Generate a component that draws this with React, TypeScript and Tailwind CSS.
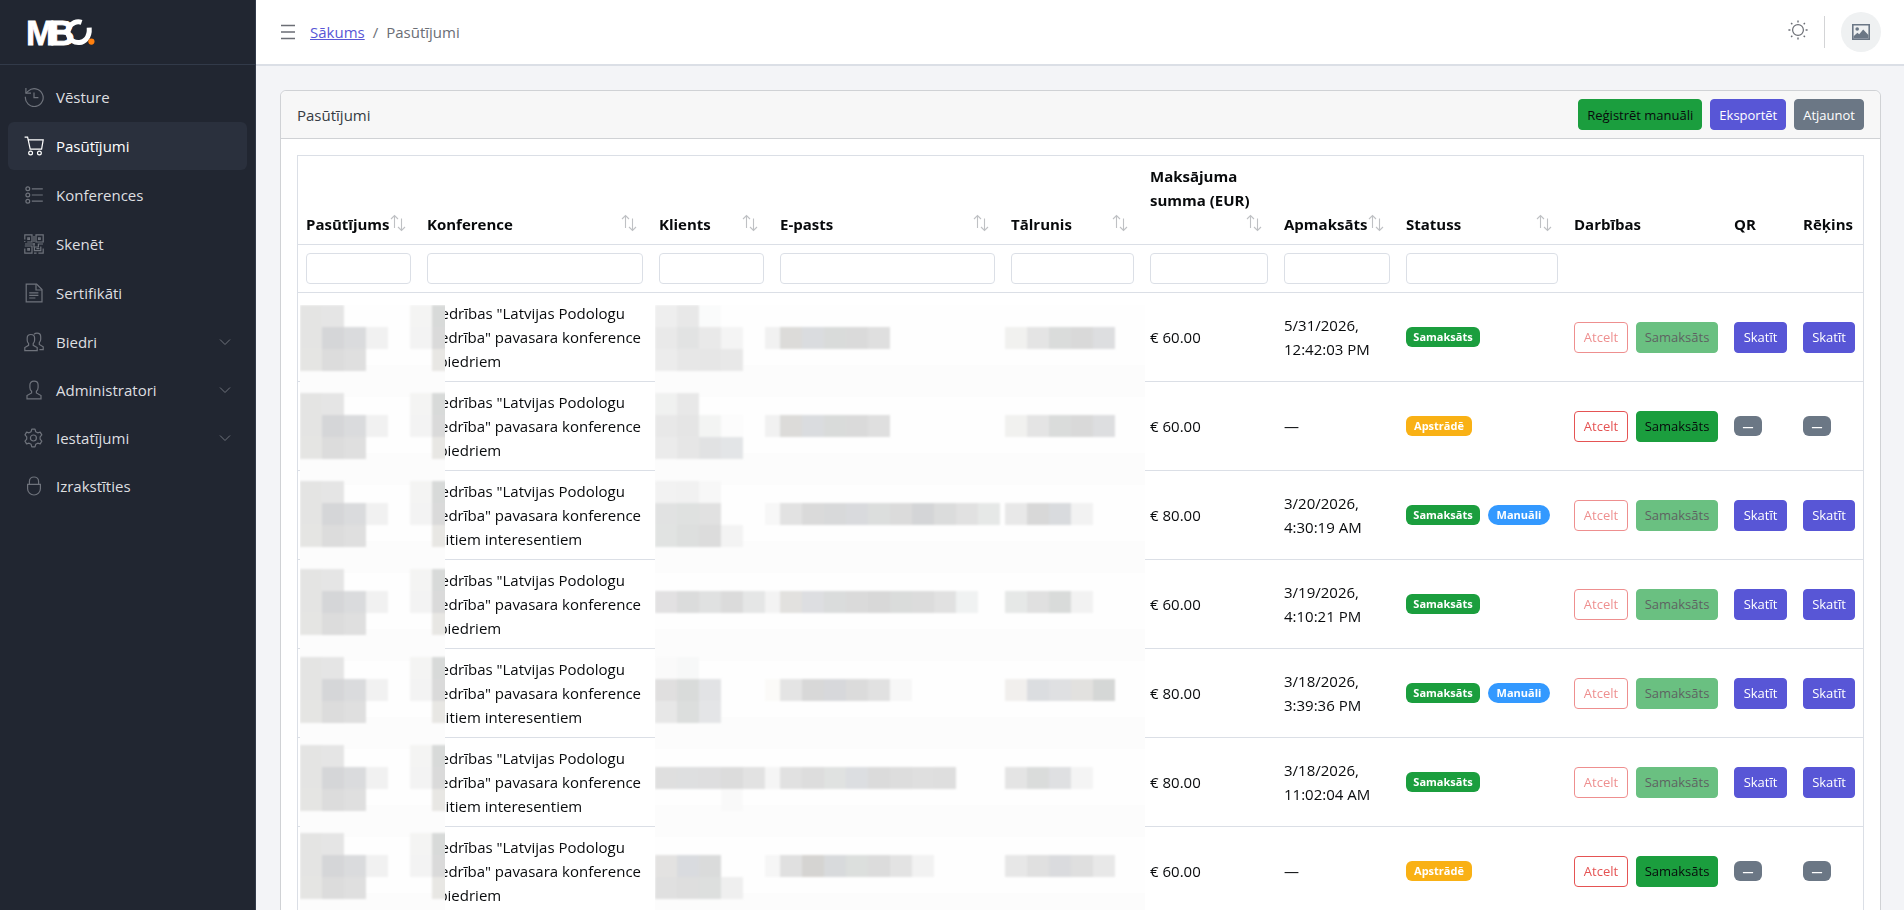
import { useState } from "react";
import type { ReactNode } from "react";

type NavItem = {
  label: string;
  icon: ReactNode;
  group?: boolean;
  active?: boolean;
};

type Order = {
  audience: string;
  amount: string;
  paidAt: string[];
  paid: boolean;
  manual?: boolean;
};

const gearPath =
  "M10 1.2 11.6 1.2 12.3 3.7 14.3 4.8 16.8 4.1 18.4 6.9 16.7 8.8 16.7 11.2 18.4 13.1 16.8 15.9 14.3 15.2 12.3 16.3 11.6 18.8 8.4 18.8 7.7 16.3 5.7 15.2 3.2 15.9 1.6 13.1 3.3 11.2 3.3 8.8 1.6 6.9 3.2 4.1 5.7 4.8 7.7 3.7 8.4 1.2Z";

const personPath =
  "M3 18.9V15.6L7.6 13V11.2C6.5 10.3 5.9 9 5.9 7.4V5C5.9 2.8 7.4 1.2 10 1.2S14.1 2.8 14.1 5V7.4C14.1 9 13.5 10.3 12.4 11.2V13L17 15.6V18.9Z";

const navItems: NavItem[] = [
  {
    label: "Vēsture",
    icon: (
      <>
        <path d="M1.4 9.7A8.9 8.9 0 1 0 4.2 4.1L2 6.1" />
        <path d="M1.9 1V6.2H7" />
        <path d="M10 5.4V10.6H14.4" />
      </>
    ),
  },
  {
    label: "Pasūtījumi",
    active: true,
    icon: (
      <>
        <path d="M.6 1.2H3.6L6.2 13.1H17.6L19.2 3.9H4.3" />
        <circle cx="6.6" cy="17" r="1.9" />
        <circle cx="15.4" cy="17" r="1.9" />
      </>
    ),
  },
  {
    label: "Konferences",
    icon: (
      <>
        <circle cx="3.8" cy="3.8" r="1.9" />
        <circle cx="3.8" cy="10" r="1.9" />
        <circle cx="3.8" cy="16.2" r="1.9" />
        <path d="M7.8 3.8H18.8M7.8 10H18.8M7.8 16.2H18.8" />
      </>
    ),
  },
  {
    label: "Skenēt",
    icon: (
      <>
        <path d="M.8 5.6V.8H8V8H3.2M.8 8V7M12 .8H19.2V8H12ZM12 5V8M.8 12H8V19.2H3.4M.8 14.4V19.2H5M14.4 19.2H19.2V14.6" />
        <path d="M3.8 3.8H5.4V5.4H3.8ZM14.6 3.8H16.2V5.4H14.6ZM3.8 14.6H5.4V16.2H3.8Z" />
        <path d="M10 2V8M1 10H11M10 9V13H14.4V10H19M10.4 13V16.6H16.8V12.6M12.4 14.6H15.4M10 19.2H12.6" />
      </>
    ),
  },
  {
    label: "Sertifikāti",
    icon: (
      <>
        <path d="M2.2 1.2H12.6L18 6.6V18.8H2.2Z" />
        <path d="M12 1.2V7H18M5.2 9.8H14.4M5.2 12.4H14.4M5.2 15H11.4" />
      </>
    ),
  },
  {
    label: "Biedri",
    group: true,
    icon: (
      <>
        <path d="M.8 18.6V15.6L4.6 13.3V11.6C3.8 10.8 3.2 9.6 3.2 8.2V6C3.2 3.9 4.6 2.5 6.9 2.5S10.6 3.9 10.6 6V8.2C10.6 9.6 10 10.8 9.2 11.6V13.3L13.2 15.6V18.6Z" />
        <path d="M10 2.3C10.7 1.5 11.7 1.1 13 1.1C15.4 1.1 16.7 2.6 16.7 4.7V7.2C16.7 8.6 16.2 9.7 15.3 10.6V12.4L19.2 14.8V17.6H15.4" />
      </>
    ),
  },
  {
    label: "Administratori",
    group: true,
    icon: <path d={personPath} />,
  },
  {
    label: "Iestatījumi",
    group: true,
    icon: (
      <g transform="translate(-.6 0)">
        <path d={gearPath} strokeLinejoin="round" />
        <circle cx="10" cy="10" r="3" />
      </g>
    ),
  },
  {
    label: "Izrakstīties",
    icon: (
      <>
        <path d="M3.6 8.4H16.4V12.8A6.4 6.2 0 0 1 3.6 12.8Z" />
        <path d="M5.4 8.4V5.4A4.6 4.4 0 0 1 14.6 5.4V8.4" />
      </>
    ),
  },
];

const orders: Order[] = [
  { audience: "biedriem", amount: "€ 60.00", paidAt: ["5/31/2026,", "12:42:03 PM"], paid: true },
  { audience: "biedriem", amount: "€ 60.00", paidAt: ["—"], paid: false },
  { audience: "citiem interesentiem", amount: "€ 80.00", paidAt: ["3/20/2026,", "4:30:19 AM"], paid: true, manual: true },
  { audience: "biedriem", amount: "€ 60.00", paidAt: ["3/19/2026,", "4:10:21 PM"], paid: true },
  { audience: "citiem interesentiem", amount: "€ 80.00", paidAt: ["3/18/2026,", "3:39:36 PM"], paid: true, manual: true },
  { audience: "citiem interesentiem", amount: "€ 80.00", paidAt: ["3/18/2026,", "11:02:04 AM"], paid: true },
  { audience: "biedriem", amount: "€ 60.00", paidAt: ["—"], paid: false },
];

const columns = [
  { label: "Pasūtījums", width: "w-[121px]", filter: true },
  { label: "Konference", width: "w-[232px]", filter: true },
  { label: "Klients", width: "w-[121px]", filter: true },
  { label: "E-pasts", width: "", filter: true },
  { label: "Tālrunis", width: "w-[139px]", filter: true },
  { label: "Maksājuma summa (EUR)", width: "w-[134px]", filter: true, stacked: true },
  { label: "Apmaksāts", width: "w-[122px]", filter: true },
  { label: "Statuss", width: "w-[168px]", filter: true },
  { label: "Darbības", width: "w-[160px]" },
  { label: "QR", width: "w-[69px]" },
  { label: "Rēķins", width: "w-[68px]" },
];

// Privacy mosaic. Every tile is 22px; one tile row repeats every 88px.
// Each entry: tile column x, tile row (0-2), colours from left to right.
type Strip = [number, number, string[]];

const idTiles: Strip[] = [
  [2, 0, ["#e4e4e3", "#e5e5e5"]],
  [112, 0, ["#f4f4f3", "#d8dad9"]],
  [2, 1, ["#e4e4e3", "#d5d6d8", "#dadbdd", "#f1f1f1"]],
  [112, 1, ["#f3f3f3", "#dadada"]],
  [2, 2, ["#e5e5e3", "#dcdcdc", "#dfdfdf"]],
  [134, 2, ["#e8e7e4"]],
];

const tiles: Strip[][] = [
  [
    [357, 0, ["#eeeeee", "#e8e8e8", "#fafbfb"]],
    [357, 1, ["#e9e9e9", "#e2e3e3", "#e9e9e9", "#f4f4f4"]],
    [357, 2, ["#ececec", "#e7e7e7", "#e6e6e6", "#e8e8e8"]],
    [467, 1, ["#f1f1f1"]],
    [482, 1, ["#dcdbd9", "#dadcdf", "#d9dbda", "#dadada", "#dfdfdf"]],
    [707, 1, ["#f1f1ef", "#e4e4e4", "#dadcdb", "#d9d9d9", "#dddee0"]],
  ],
  [
    [357, 0, ["#f0f1f0", "#e8e8e8"]],
    [357, 1, ["#e8e8e8", "#e5e5e5", "#f3f4f3", "#fcfcfc"]],
    [357, 2, ["#ebebeb", "#e6e6e6", "#e1e2e3", "#e3e5e7"]],
    [467, 1, ["#f1f1f1"]],
    [482, 1, ["#dcdbd9", "#dadcdf", "#d9dbda", "#dadada", "#dfdfdf"]],
    [707, 1, ["#f1f1ef", "#e4e4e4", "#dadcdb", "#d9d9d9", "#dddee0"]],
  ],
  [
    [357, 0, ["#f2f2f2", "#f1f1f1", "#f7f7f7"]],
    [357, 1, ["#e1e2e2", "#dfe1e0", "#e1e1e1"]],
    [357, 2, ["#e1e3e2", "#dddfde", "#dcdcdc", "#f3f3f3"]],
    [467, 1, ["#f7f7f7"]],
    [482, 1, ["#e2e2e2", "#dadada", "#d8d9da", "#d9dadd", "#dcdedd", "#dbdbdb", "#d4d5d7", "#dbdcdc", "#e1e1e1", "#e6e8e7"]],
    [707, 1, ["#e8e8e8", "#d8d8d8", "#d9dbde", "#f2f2f2"]],
  ],
  [
    [357, 1, ["#e2e1e2", "#dbdcdc", "#e0e1e1", "#dbdbdb", "#e5e6e6"]],
    [467, 1, ["#f3f3f3"]],
    [482, 1, ["#e2e1df", "#dddee1", "#dadcdc", "#dadada", "#d8d8d8", "#dadcdb", "#dcdcdc", "#e1e1e1", "#f0f2f2"]],
    [707, 1, ["#e6e8e7", "#e0e0e0", "#d9dbda", "#f2f2f2"]],
  ],
  [
    [357, 0, ["#fafafa", "#f7f8f8"]],
    [357, 1, ["#e0dfdf", "#d9dbda", "#e2e3e5"]],
    [357, 2, ["#e7e7e7", "#dcdedd", "#e4e5e7"]],
    [467, 1, ["#fbfaf8"]],
    [482, 1, ["#e4e4e4", "#d8d8d8", "#d7d8db", "#dbdbdb", "#e1e1e1", "#f7f7f7"]],
    [707, 1, ["#f1efed", "#dbdde0", "#dfe0e2", "#e2e1df", "#d5d7d6"]],
  ],
  [
    [357, 1, ["#dfdfdf", "#dedfe0", "#dededf", "#dcdcdc", "#e2e2e2"]],
    [423, 2, ["#f9f9f9"]],
    [467, 1, ["#f5f5f5"]],
    [482, 1, ["#e1e1e1", "#dddddd", "#e0e2e1", "#dcdee1", "#dbdbdb", "#dddddd", "#dfdfdf", "#dedede"]],
    [707, 1, ["#e4e4e4", "#dadcdb", "#dfe0e2", "#f4f4f4"]],
  ],
  [
    [357, 1, ["#e3e2e1", "#d9dbdf", "#dadbdb"]],
    [357, 2, ["#e0e0e0", "#dedede", "#dddfde", "#efefef"]],
    [467, 1, ["#f6f6f6"]],
    [482, 1, ["#e0e0e0", "#d5d4d2", "#d8dadc", "#dcdfdd", "#dcdcdc", "#e3e3e3", "#f2f2f2"]],
    [707, 1, ["#e7e7e7", "#e0e0e0", "#dadbde", "#dfdfdf", "#e8e8e8"]],
  ],
];

function PrivacyMosaic() {
  return (
    <svg
      aria-hidden="true"
      className="pointer-events-none absolute top-0 left-0 h-full w-[847px] overflow-hidden"
    >
      <defs>
        <filter id="tile-soften" x="-5%" y="-5%" width="110%" height="110%">
          <feGaussianBlur stdDeviation="1" />
        </filter>
        <clipPath id="mosaic-area">
          <rect x="2" y="149" width="145" height="640" />
          <rect x="357" y="149" width="490" height="640" />
        </clipPath>
      </defs>
      <g clipPath="url(#mosaic-area)">
        <rect width="847" height="789" fill="#fefefe" />
        {tiles.map((row, i) => (
          <rect key={i} y={209 + i * 88} width="847" height="32" fill="#fcfcfc" />
        ))}
        <g filter="url(#tile-soften)">
          {tiles.map((row, i) =>
            [...idTiles, ...row].map(([x, line, colors]) =>
              colors.map((color, n) => (
                <rect
                  key={`${i}-${x}-${line}-${n}`}
                  x={x + n * 22}
                  y={149 + i * 88 + line * 22}
                  width={x === 467 ? 15 : 22}
                  height="22"
                  fill={color}
                />
              )),
            ),
          )}
        </g>
      </g>
    </svg>
  );
}

function Logo() {
  return (
    <svg width="68" height="28" viewBox="0 0 68 28" className="overflow-visible" role="img" aria-label="MBC">
      <text
        x="-2"
        y="26.6"
        fill="#fff"
        stroke="#fff"
        strokeWidth=".8"
        fontFamily="Liberation Sans, Arial, sans-serif"
        fontWeight="700"
        fontSize="35"
      >
        M<tspan dx="-6">B</tspan>
      </text>
      <path d="M53.6 4.3A10.4 10.4 0 1 0 58 21.2Q61.8 17 61.2 9.6" fill="none" stroke="#fff" strokeWidth="5" />
      <circle cx="63.4" cy="23.6" r="3.1" fill="#ff7f0e" />
    </svg>
  );
}

function Sidebar() {
  return (
    <aside className="sticky top-0 h-screen w-64 shrink-0 border-r border-[#323a49] bg-[#212631] text-[#dedfe0]">
      <div className="flex h-[65px] items-center border-b border-[#323a49] px-7">
        <Logo />
      </div>
      <nav className="p-2">
        <ul>
          {navItems.map((item) => (
            <li key={item.label} className={item.group ? "" : "not-last:mb-px"}>
              <a
                href="#"
                className={`flex h-12 items-center gap-3 rounded-md px-4 ${
                  item.active ? "bg-[#2a303d] text-white" : "hover:bg-[#2a303d]"
                }`}
              >
                <svg
                  viewBox="0 0 20 20"
                  fill="none"
                  stroke="currentColor"
                  strokeWidth="1.2"
                  className={`h-5 w-5 shrink-0 ${item.active ? "text-white" : "text-[#6f737c]"}`}
                >
                  {item.icon}
                </svg>
                <span className="flex-1">{item.label}</span>
                {item.group && (
                  <svg
                    viewBox="0 0 12 12"
                    fill="none"
                    stroke="currentColor"
                    className="h-3 w-3 text-[#6f737c]"
                  >
                    <path d="M1 3.5 6 8.5 11 3.5" />
                  </svg>
                )}
              </a>
            </li>
          ))}
        </ul>
      </nav>
    </aside>
  );
}

function Header() {
  return (
    <header className="flex h-[66px] items-center border-b-2 border-[#dbdfe6] bg-white pr-[23px] pl-6">
      <button type="button" aria-label="Izvēlne" className="text-[#6b6e75]">
        <svg viewBox="0 0 16 16" fill="none" stroke="currentColor" className="h-4 w-4">
          <path d="M1 1.5H15M1 8H15M1 14.5H15" strokeWidth="1.4" />
        </svg>
      </button>
      <nav className="ml-3.5 flex gap-2 text-[#6b6e75]">
        <a href="#" className="text-[#5856d6] underline">
          Sākums
        </a>
        <span>/</span>
        <span>Pasūtījumi</span>
      </nav>
      <div className="ml-auto flex items-center gap-4">
        <button type="button" aria-label="Tēma" className="text-[#6b6e75]">
          <svg viewBox="0 0 20 20" fill="none" stroke="currentColor" strokeWidth="1.2" className="mb-1 h-5 w-5">
            <circle cx="10" cy="10" r="5.4" />
            <path
              strokeWidth="1.4"
              d="M10 .4V2.4M10 17.6V19.6M.4 10H2.4M17.6 10H19.6M3.1 3.1 4.3 4.3M15.7 15.7 16.9 16.9M3.1 16.9 4.3 15.7M15.7 4.3 16.9 3.1"
            />
          </svg>
        </button>
        <div className="h-8 w-px bg-[#d3d4d6]" />
        <button
          type="button"
          aria-label="Profils"
          className="flex h-10 w-10 items-center justify-center rounded-full bg-[#eff1f2]"
        >
          <svg viewBox="0 0 18 16" className="h-4 w-[18px] text-[#6b7785]" fill="currentColor">
            <path fillRule="evenodd" d="M0 0H18V16H0ZM1.6 1.6V14.4H16.4V1.6Z" />
            <circle cx="5.2" cy="5" r="1.8" />
            <path d="M1.6 12.2 5.4 8.8 7.2 10.2 11.2 5.6 16.4 11V14.6H1.6Z" />
          </svg>
        </button>
      </div>
    </header>
  );
}

function SortIcon() {
  return (
    <svg
      viewBox="0 0 16 18"
      fill="none"
      stroke="currentColor"
      strokeWidth="1.1"
      className="mr-1.5 mb-1 h-[18px] w-4 shrink-0 text-[#bfc1c4]"
    >
      <path d="M4.5 14V1.5M1 5 4.5 1.5 8 5" />
      <path d="M11.5 4.5V16.5M8 13 11.5 16.5 15 13" />
    </svg>
  );
}

const smallButton = "h-[31px] rounded border text-[13px] whitespace-nowrap";
const badge =
  "flex h-5 items-center justify-center text-[11px] font-bold text-white";

function DocumentCell({ available }: { available: boolean }) {
  return available ? (
    <button type="button" className={`${smallButton} w-full border-[#5856d6] bg-[#5856d6] text-white`}>
      Skatīt
    </button>
  ) : (
    <span className={`${badge} w-7 rounded-md bg-[#6b7785]`}>—</span>
  );
}

function OrdersTable() {
  const [filters, setFilters] = useState<Record<string, string>>({});

  return (
    <div className="relative border border-[#dbdfe6] border-b-0">
      <table className="w-full table-fixed border-separate border-spacing-0 text-[#080a0c]">
        <thead>
          <tr>
            {columns.map((col) => (
              <th
                key={col.label}
                scope="col"
                className={`${col.width} border-b border-[#dbdfe6] p-2 text-left align-bottom font-bold`}
              >
                {col.stacked ? (
                  <div className="flex flex-col">
                    <span>{col.label}</span>
                    <span className="flex h-6 items-end justify-end">
                      <SortIcon />
                    </span>
                  </div>
                ) : (
                  <div className="flex h-6 items-end justify-between">
                    <span>{col.label}</span>
                    {col.filter && <SortIcon />}
                  </div>
                )}
              </th>
            ))}
          </tr>
          <tr>
            {columns.map((col) => (
              <td key={col.label} className="h-12 border-b border-[#dbdfe6] px-2">
                {col.filter && (
                  <input
                    type="text"
                    aria-label={col.label}
                    value={filters[col.label] ?? ""}
                    onChange={(e) => setFilters({ ...filters, [col.label]: e.target.value })}
                    className="block h-[31px] w-full rounded border border-[#dbdfe6] px-2 text-[13px]"
                  />
                )}
              </td>
            ))}
          </tr>
        </thead>
        <tbody className="[&_td]:border-b [&_td]:border-[#dbdfe6] [&_td]:p-2">
          {orders.map((order, i) => (
            <tr key={i}>
              <td />
              <td className="whitespace-nowrap">
                Biedrības "Latvijas Podologu
                <br />
                biedrība" pavasara konference
                <br />– {order.audience}
              </td>
              <td />
              <td />
              <td />
              <td>{order.amount}</td>
              <td className="whitespace-nowrap">
                {order.paidAt.map((line) => (
                  <div key={line}>{line}</div>
                ))}
              </td>
              <td>
                <div className="flex gap-2">
                  {order.paid ? (
                    <span className={`${badge} w-[74px] rounded-md bg-[#1b9e3e]`}>Samaksāts</span>
                  ) : (
                    <span className={`${badge} w-[66px] rounded-md bg-[#f9b115]`}>Apstrādē</span>
                  )}
                  {order.manual && (
                    <span className={`${badge} w-[62px] rounded-full bg-[#3399ff]`}>Manuāli</span>
                  )}
                </div>
              </td>
              <td>
                <div className="flex gap-2">
                  <button
                    type="button"
                    disabled={order.paid}
                    className={`${smallButton} w-[54px] border-[#e55353] text-[#e55353] disabled:opacity-65`}
                  >
                    Atcelt
                  </button>
                  <button
                    type="button"
                    disabled={order.paid}
                    className={`${smallButton} w-[82px] border-[#1b9e3e] bg-[#1b9e3e] text-[#080a0c] disabled:opacity-65`}
                  >
                    Samaksāts
                  </button>
                </div>
              </td>
              <td>
                <DocumentCell available={order.paid} />
              </td>
              <td>
                <DocumentCell available={order.paid} />
              </td>
            </tr>
          ))}
        </tbody>
      </table>
      <PrivacyMosaic />
    </div>
  );
}

export default function App() {
  return (
    <div className="flex h-screen overflow-hidden bg-[#f3f4f7] font-['Open_Sans','Noto_Sans',sans-serif] text-[15px] leading-6 text-[#363b43]">
      <Sidebar />
      <div className="min-w-0 flex-1">
        <Header />
        <main className="py-6 pr-[23px] pl-6">
          <section className="rounded-md border border-[#d0d2d5] bg-white">
            <div className="flex items-center gap-2 rounded-t-md border-b border-[#d0d2d5] bg-[#f7f7f7] px-4 py-2">
              <h1 className="mr-auto">Pasūtījumi</h1>
              <button type="button" className={`${smallButton} border-[#1b9e3e] bg-[#1b9e3e] px-2 text-[#080a0c]`}>
                Reģistrēt manuāli
              </button>
              <button type="button" className={`${smallButton} border-[#5856d6] bg-[#5856d6] px-2 text-white`}>
                Eksportēt
              </button>
              <button type="button" className={`${smallButton} border-[#6b7785] bg-[#6b7785] px-2 text-white`}>
                Atjaunot
              </button>
            </div>
            <div className="p-4">
              <OrdersTable />
            </div>
          </section>
        </main>
      </div>
    </div>
  );
}
